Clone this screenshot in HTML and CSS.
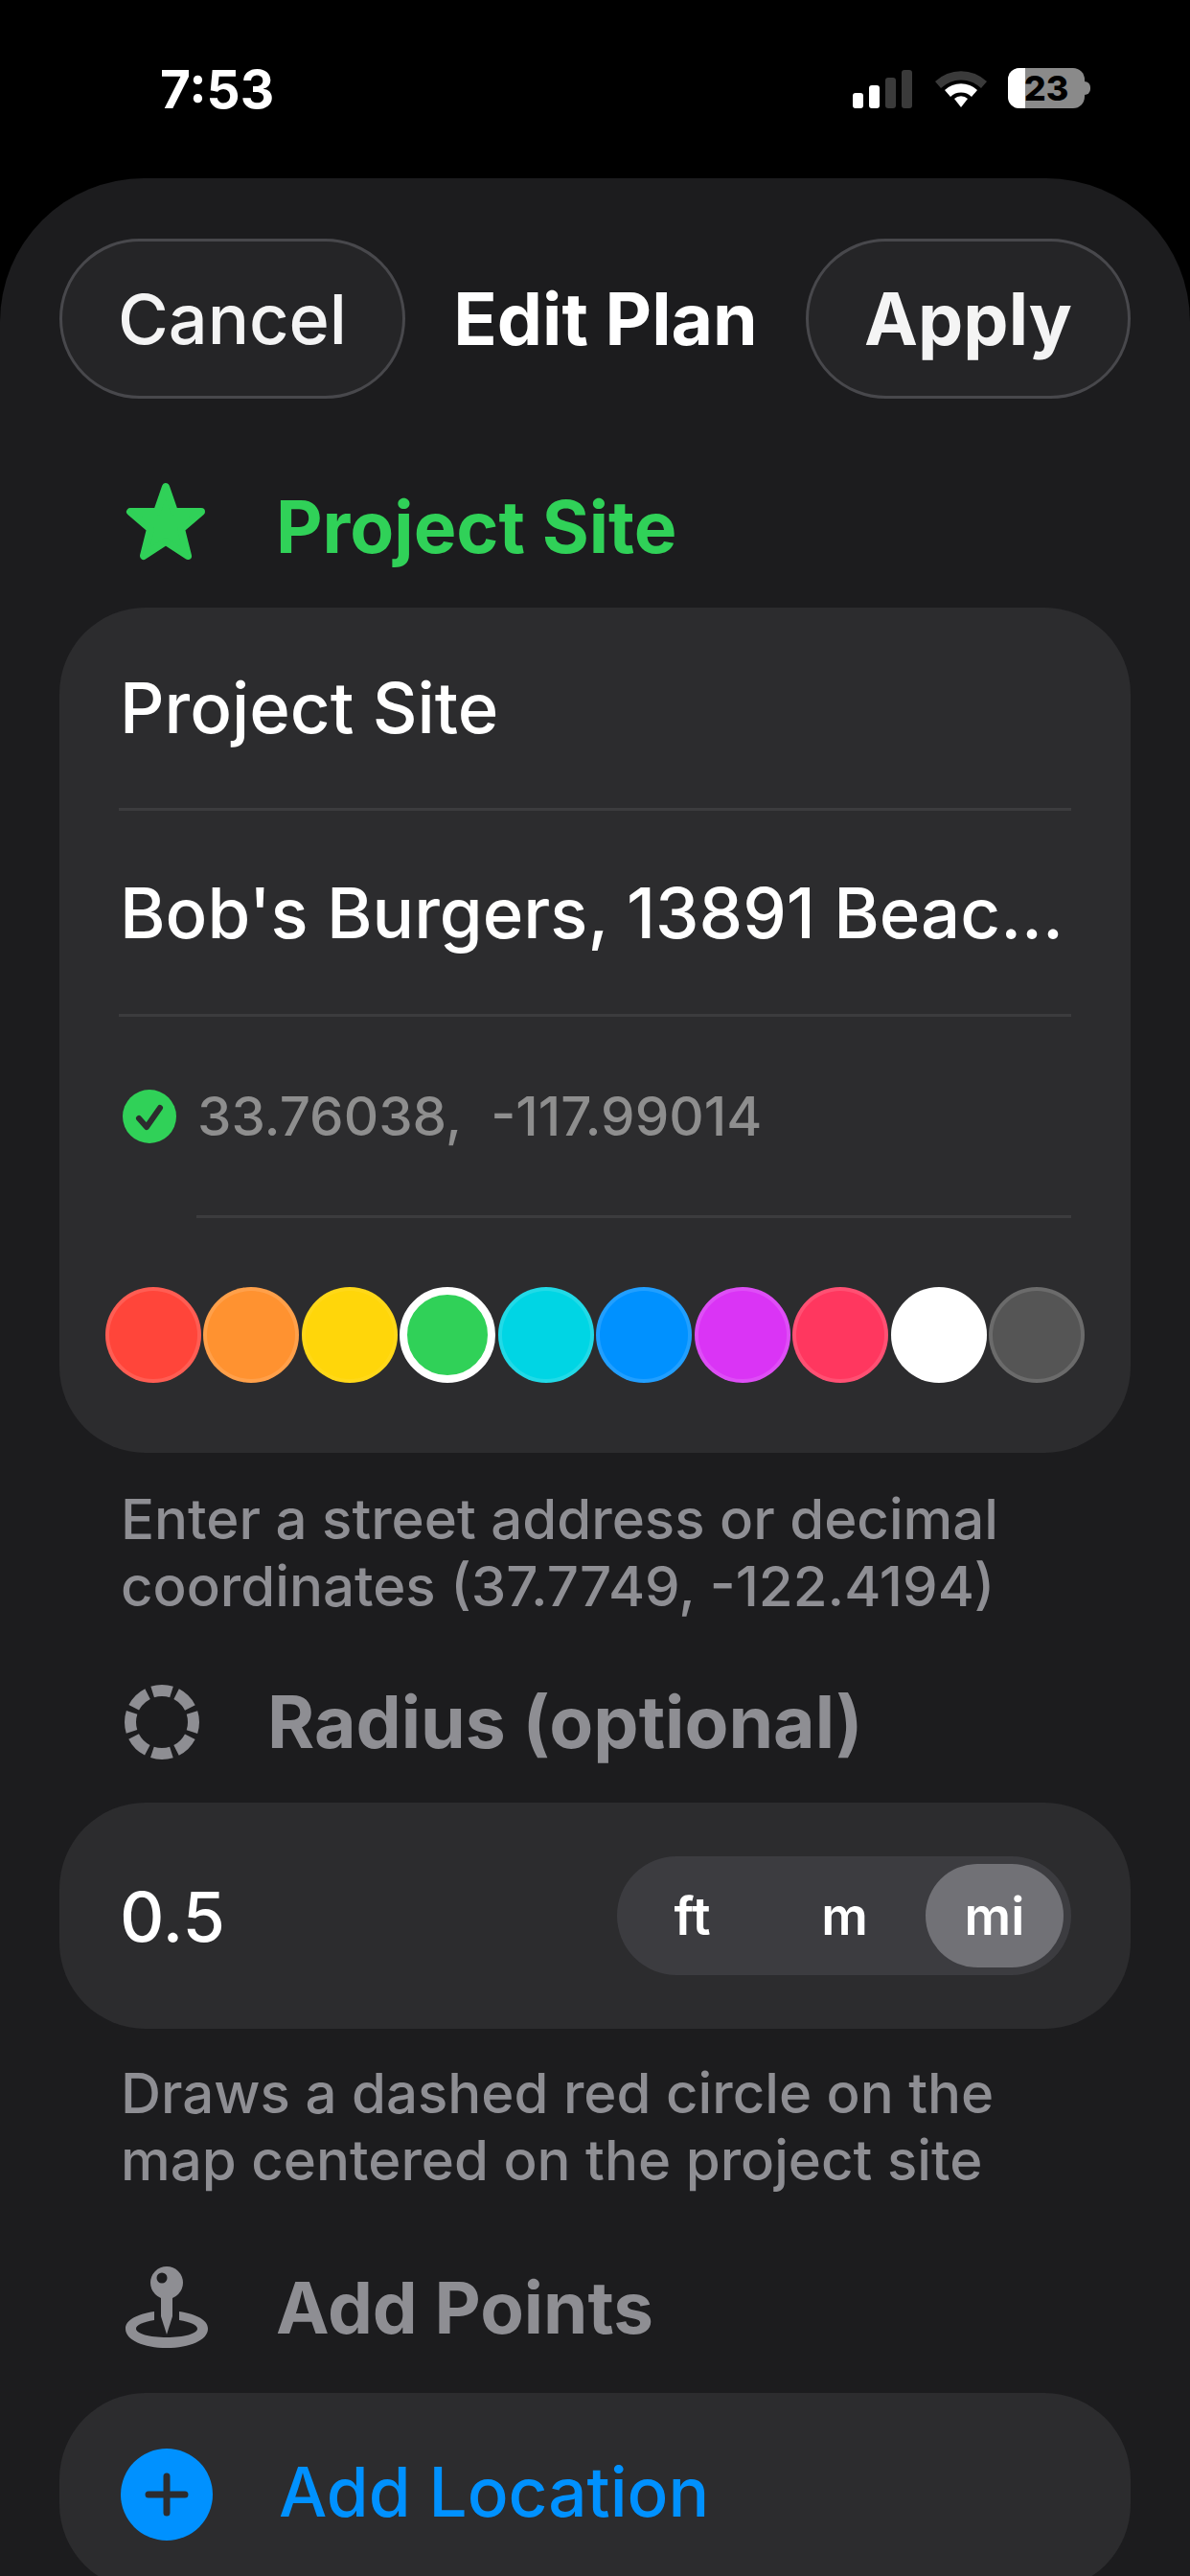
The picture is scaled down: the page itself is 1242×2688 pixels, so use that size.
FILE: index.html
```html
<!DOCTYPE html>
<html lang="en">
<head>
<meta charset="utf-8">
<title>Edit Plan</title>
<link rel="stylesheet" href="styles.css">
</head>
<body>
<div class="screen">
  <header class="status">
    <span class="time">7:53</span>
    <div class="status-icons">
      <svg class="signal" width="62" height="40" viewBox="0 0 62 40"><rect x="0" y="24" width="11" height="16" rx="3" fill="#fff"/><rect x="17" y="16" width="11" height="24" rx="3" fill="#fff"/><rect x="34" y="8" width="11" height="32" rx="3" fill="#3a3a3a"/><rect x="51" y="0" width="11" height="40" rx="3" fill="#3a3a3a"/></svg>
      <svg class="wifi" width="54" height="40" viewBox="0 0 54 40"><path d="M0 13 A39 39 0 0 1 54 13 L48 20 A30 30 0 0 0 6 20Z" fill="#3a3a3a"/><path d="M10 24 A25 25 0 0 1 44 24 L38 31 A16 16 0 0 0 16 31Z" fill="#fff" transform="translate(0 -2)"/><path d="M20 31 A10 10 0 0 1 34 31 L27 40Z" fill="#fff"/></svg>
      <div class="battery"><span class="battery-fill"></span><span class="battery-num">23</span></div>
      <span class="battery-nub"></span>
    </div>
  </header>
  <main class="sheet">
    <nav class="navbar">
      <button class="pill pill-cancel">Cancel</button>
      <h1 class="nav-title">Edit Plan</h1>
      <button class="pill pill-apply">Apply</button>
    </nav>
    <div class="section-head head-site">
      <svg class="star" width="88" height="84" viewBox="0 0 88 84"><path d="M43 6 L52 32 L80 32 L59 50 L66 78 L43 63 L20 78 L27 50 L6 32 L34 32Z" fill="#30d158" stroke="#30d158" stroke-width="8" stroke-linejoin="round"/></svg>
      <h2 class="section-title title-green">Project Site</h2>
    </div>
    <section class="card card-site">
      <div class="row row-name">Project Site</div>
      <div class="divider"></div>
      <div class="row row-addr">Bob's Burgers, 13891 Beac...</div>
      <div class="divider"></div>
      <div class="row row-coords">
        <svg class="check" width="56" height="56" viewBox="0 0 56 56"><circle cx="28" cy="28" r="28" fill="#30d158"/><path d="M17 30 L25 39 L39 19" fill="none" stroke="#2c2c2e" stroke-width="6" stroke-linecap="round" stroke-linejoin="round"/></svg>
        <span class="coords">33.76038,&nbsp; -117.99014</span>
      </div>
      <div class="divider divider-inset"></div>
      <div class="swatches">
        <span class="swatch s-red"></span>
        <span class="swatch s-orange"></span>
        <span class="swatch s-yellow"></span>
        <span class="swatch s-green"></span>
        <span class="swatch s-cyan"></span>
        <span class="swatch s-blue"></span>
        <span class="swatch s-purple"></span>
        <span class="swatch s-pink"></span>
        <span class="swatch s-white"></span>
        <span class="swatch s-gray"></span>
      </div>
    </section>
    <p class="note note-site">Enter a street address or decimal<br>coordinates (37.7749, -122.4194)</p>
    <div class="section-head head-radius">
      <svg class="dash" width="78" height="78" viewBox="0 0 78 78"><circle cx="39" cy="39" r="33" fill="none" stroke="#8e8e93" stroke-width="12" stroke-dasharray="20.4 5.5" stroke-dashoffset="10.2" transform="rotate(-90 39 39)"/></svg>
      <h2 class="section-title title-gray title-radius">Radius (optional)</h2>
    </div>
    <section class="card card-radius">
      <span class="radius-value">0.5</span>
      <div class="segmented">
        <span class="seg seg-ft">ft</span>
        <span class="seg seg-m">m</span>
        <span class="seg seg-on">mi</span>
      </div>
    </section>
    <p class="note note-radius">Draws a dashed red circle on the<br>map centered on the project site</p>
    <div class="section-head head-points">
      <svg class="pin" width="88" height="86" viewBox="0 0 88 86"><path d="M31 47 C12 50 1 56 1 65 C1 77 20 85 44 85 C68 85 87 77 87 65 C87 56 76 50 57 47 V56 C69 58 76 61 76 65 C76 70 62 74 44 74 C26 74 12 70 12 65 C12 61 19 58 31 56Z" fill="#8e8e93"/><path d="M38 30 H50 V52 L44 71 L38 52Z" fill="#8e8e93"/><circle cx="44" cy="17" r="17" fill="#8e8e93"/><circle cx="39" cy="12" r="5.500" fill="#1c1c1e"/></svg>
      <h2 class="section-title title-gray title-points">Add Points</h2>
    </div>
    <section class="card card-add">
      <svg class="plus" width="96" height="96" viewBox="0 0 96 96"><circle cx="48" cy="48" r="48" fill="#0091ff"/><path d="M48 29 V67 M29 48 H67" stroke="#2c2c2e" stroke-width="7" stroke-linecap="round"/></svg>
      <span class="add-label">Add Location</span>
    </section>
  </main>
</div>
</body>
</html>
```
FILE: styles.css
```css
* { box-sizing: border-box; margin: 0; padding: 0; }
html, body { background: #000; }
body { width: 1242px; height: 2688px; overflow: hidden; font-family: Inter, "Liberation Sans", sans-serif; color: #fff; }
.screen { width: 1242px; height: 2688px; display: flex; flex-direction: column; overflow: hidden; }

.status { height: 186px; flex: none; display: flex; justify-content: space-between; padding: 66px 104px 0 167px; }
.time { font-size: 55px; font-weight: 700; line-height: 54px; letter-spacing: 0; }
.status-icons { display: flex; align-items: flex-start; padding-top: 6px; height: 48px; }
.signal { margin-top: 1px; }
.wifi { margin-left: 24px; margin-top: 0; }
.battery { margin-left: 22px; margin-top: -1px; position: relative; width: 80px; height: 42px; border-radius: 12px; background: #8a8a8a; overflow: hidden; display: flex; align-items: center; justify-content: center; }
.battery-fill { position: absolute; left: 0; top: 0; bottom: 0; width: 18px; background: #fff; }
.battery-num { position: relative; font-size: 36px; font-weight: 800; color: #000; line-height: 42px; }
.battery-nub { width: 6px; height: 14px; margin-top: 13px; background: #8a8a8a; border-radius: 0 7px 7px 0; }

.sheet { flex: 1; background: #1c1c1e; border-radius: 150px 150px 0 0; padding: 63px 62px 0; }

.navbar { display: flex; justify-content: space-between; align-items: center; height: 167px; }
.pill { height: 167px; border-radius: 84px; background: #252527; border: 3px solid #48484c; color: #f4f4f4; font-family: inherit; font-size: 72px; display: flex; align-items: center; justify-content: center; }
.pill-cancel { width: 361px; font-weight: 500; }
.pill-apply { width: 339px; font-weight: 700; font-size: 75px; }
.nav-title { font-size: 75px; font-weight: 700; color: #fff; }

.section-head { display: flex; align-items: center; }
.section-title { font-size: 75px; font-weight: 700; line-height: 82px; }
.title-green { color: #30d158; }
.title-gray { color: #8e8e93; }
.title-points { margin-left: -2px; font-size: 74.500px; }
.star { align-self: flex-start; margin-top: -3px; }
.head-site { margin-top: 89px; height: 90px; padding-left: 68px; gap: 70px; }
.head-radius { margin-top: 62px; height: 90px; padding-left: 68px; gap: 71px; }
.head-points { margin-top: 74px; height: 90px; padding-left: 68px; gap: 72px; }

.card { background: #2c2c2e; }
.card-site { margin-top: 39px; height: 882px; border-radius: 90px; padding: 0 62px 0; display: flex; flex-direction: column; position: relative; }
.row { font-size: 72.500px; font-weight: 500; display: flex; align-items: center; color: #fff; }
.row-name { height: 209px; padding-left: 1px; }
.row-addr { height: 212px; padding-left: 1px; white-space: nowrap; }
.row-coords { height: 207px; gap: 22px; padding-left: 4px; }
.divider { height: 3px; background: #3c3c3e; flex: none; }
.divider-inset { margin-left: 81px; }
.coords { font-size: 56.500px; font-weight: 500; color: #8e8e8e; }
.swatches { display: flex; margin: 72px -14px 0 -14px; justify-content: space-between; }
.swatch { width: 100px; height: 100px; border-radius: 50%; flex: none; box-shadow: inset 0 0 0 4px rgba(255,255,255,.13); }
.s-red { background: #ff453a; }
.s-orange { background: #ff9230; }
.s-yellow { background: #ffd60a; box-shadow: inset 0 0 0 4px rgba(255,255,255,.06); }
.s-green { background: #30d158; box-shadow: none; border: 8px solid #fff; }
.s-cyan { background: #00d5e4; }
.s-blue { background: #0091ff; }
.s-purple { background: #da34f5; }
.s-pink { background: #ff375f; }
.s-white { background: #fff; }
.s-gray { background: #555; }

.note { padding-left: 64px; font-size: 58.200px; font-weight: 500; line-height: 70px; color: #8e8e93; white-space: nowrap; }
.note-site { margin-top: 34px; }
.note-radius { margin-top: 32px; }

.card-radius { margin-top: 39px; height: 236px; border-radius: 90px; padding: 0 62px 0 63px; display: flex; align-items: center; justify-content: space-between; }
.radius-value { font-size: 72px; font-weight: 500; }
.segmented { width: 474px; height: 124px; border-radius: 62px; background: #3c3c40; padding: 8px; display: flex; align-items: stretch; }
.seg { flex: 1; display: flex; align-items: center; justify-content: center; font-size: 54px; font-weight: 600; color: #fff; border-radius: 55px; }
.seg-ft { padding-right: 18px; }
.seg-m { padding-right: 14px; }
.seg-on { background: #717176; flex: none; width: 144px; }

.card-add { margin-top: 44px; height: 206px; border-radius: 90px; padding: 0 64px; display: flex; align-items: center; gap: 69px; }
.plus { margin-top: 5px; }
.add-label { font-size: 71px; font-weight: 500; color: #0091ff; }
```
